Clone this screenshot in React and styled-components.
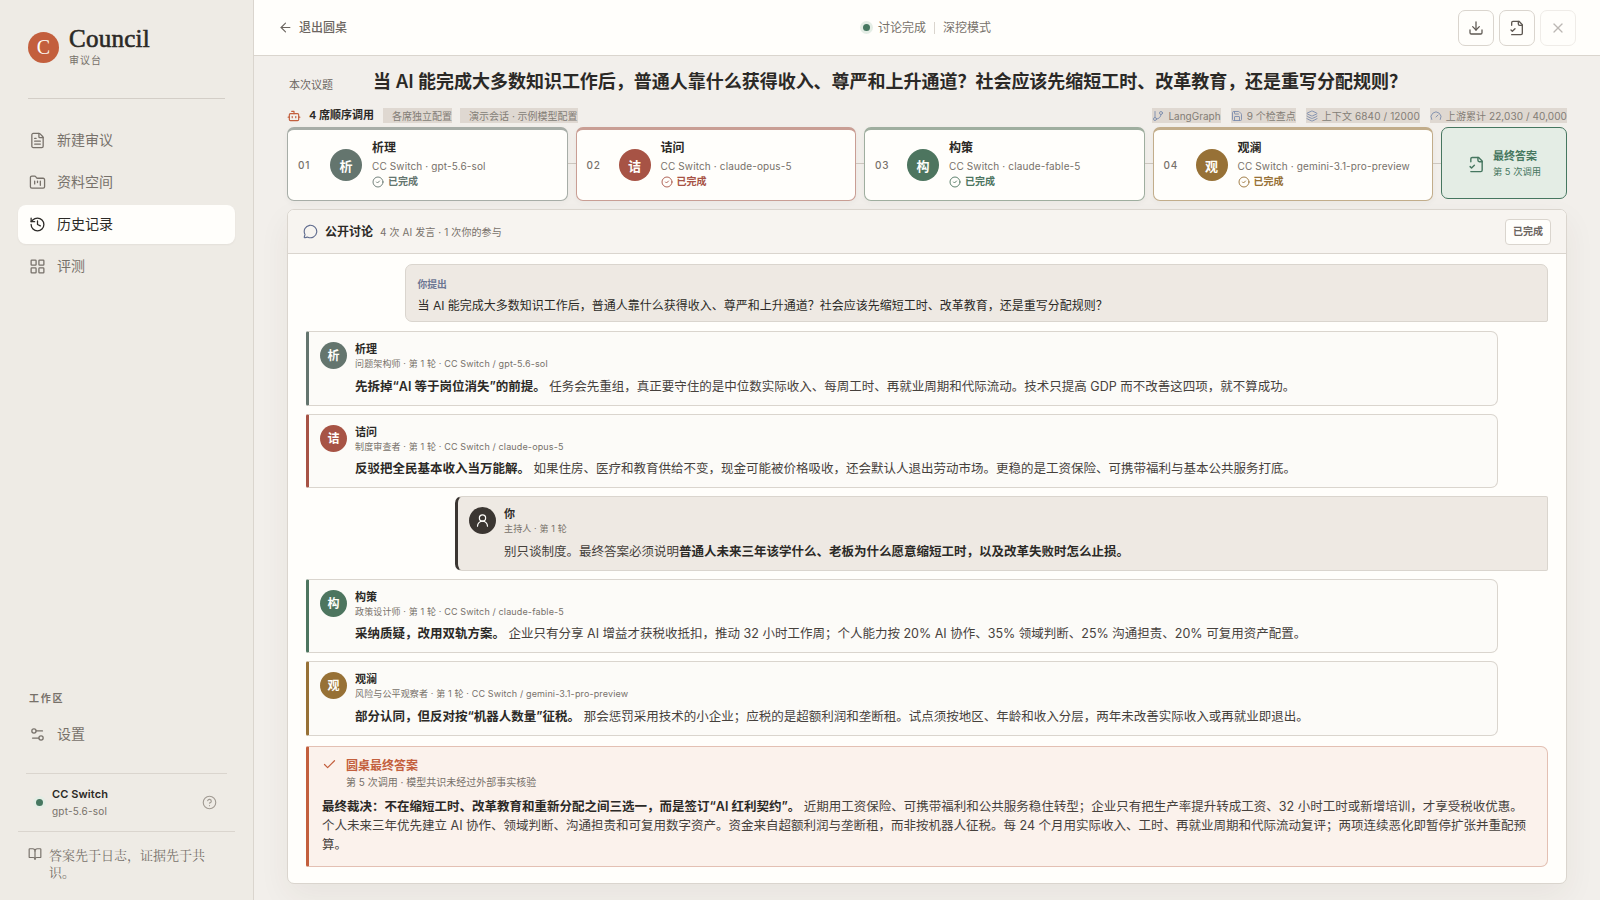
import React from 'react';
import styled, { createGlobalStyle } from 'styled-components';
import {
  ArrowLeft, BookOpen, Bot, Check, CircleCheck, CircleHelp, Download, FileText,
  FolderKanban, Gauge, GitBranch, History, Layers, LayoutGrid, MessageCircle,
  Save, Settings2, UserRound, X,
} from 'lucide-react';

const GlobalStyle = createGlobalStyle`
  * {
    box-sizing: border-box;
  }

  body {
    margin: 0;
    background: #f2efeb;
    color: #2b2926;
    font-family: Inter, "Noto Sans CJK SC", sans-serif;
    -webkit-font-smoothing: antialiased;
  }

  svg {
    display: block;
    flex: none;
  }
`;

const Shell = styled.div`
  display: grid;
  grid-template-columns: 254px 1fr;
  height: 900px;
  overflow: hidden;
`;

/* ---------- sidebar ---------- */

const Sidebar = styled.aside`
  display: flex;
  flex-direction: column;
  padding: 0 18px;
  background: #eeebe5;
  border-right: 1px solid #dad5ce;
`;

const Brand = styled.div`
  display: flex;
  align-items: center;
  gap: 10px;
  height: 99px;
  margin: 0 10px;
  padding-bottom: 4px;
  border-bottom: 1px solid #d3cec7;
`;

const BrandMark = styled.div`
  display: grid;
  place-items: center;
  width: 31px;
  height: 31px;
  border-radius: 50%;
  background: #c35f3d;
  color: #fffefb;
  font: 20px/1 "Liberation Serif", serif;
`;

const BrandName = styled.div`
  font: 25px/26px "Liberation Serif", serif;
  letter-spacing: 0.25px;
  -webkit-text-stroke: 0.6px #2b2926;
`;

const BrandSub = styled.div`
  margin-top: 1px;
  padding-bottom: 1px;
  font-size: 10px;
  line-height: 14px;
  letter-spacing: 1px;
  color: #77716a;
`;

const Nav = styled.nav`
  display: flex;
  flex-direction: column;
  gap: 3px;
  margin-top: 22px;
`;

const NavItem = styled.div`
  display: flex;
  align-items: center;
  gap: 11px;
  height: 39px;
  padding: 0 11px;
  border-radius: 8px;
  font-size: 14px;
  color: ${props => props.$active ? '#2b2926' : '#77716a'};
  background: ${props => props.$active ? '#fffefb' : 'transparent'};
  box-shadow: ${props => props.$active ? '0 1px 2px rgba(60, 50, 40, 0.06)' : 'none'};

  span {
    padding-bottom: 3px;
  }
`;

const NavLabel = styled.div`
  margin: auto 11px 9px;
  font-size: 10px;
  font-weight: 600;
  line-height: 16px;
  letter-spacing: 1.8px;
  color: #77716a;
`;

const Provider = styled.div`
  display: flex;
  align-items: center;
  height: 58px;
  margin: 19px 8px 0;
  padding: 0 10px;
  border-top: 1px solid #dad5ce;
`;

const Dot = styled.span`
  width: 7px;
  height: 7px;
  border-radius: 50%;
  background: #467760;
  box-shadow: 0 0 0 3px #e4ede5;
`;

const ProviderText = styled.div`
  flex: 1;
  margin-left: 9px;
  color: #77716a;
  font-size: 10px;
  line-height: 17px;
  letter-spacing: 0.2px;

  strong {
    display: block;
    font-size: 11px;
    font-weight: 600;
    letter-spacing: 0.1px;
    color: #2b2926;
  }
`;

const Motto = styled.div`
  display: flex;
  gap: 7px;
  height: 69px;
  padding: 15px 18px 0 10px;
  border-top: 1px solid #dad5ce;
  font: 13px/17px "Liberation Serif", "Noto Serif CJK SC", "Noto Sans CJK SC", serif;
  color: #77716a;
`;

/* ---------- top bar ---------- */

const Main = styled.main`
  display: flex;
  flex-direction: column;
  min-width: 0;
`;

const TopBar = styled.header`
  display: grid;
  grid-template-columns: 1fr auto 1fr;
  align-items: center;
  height: 56px;
  padding: 0 24px;
  background: #fffefb;
  border-bottom: 1px solid #dad5ce;
  font-size: 12px;
  color: #6b655f;
`;

const Back = styled.div`
  display: flex;
  align-items: center;
  gap: 6px;
  font-weight: 500;

  span {
    padding-bottom: 2px;
  }
`;

const Status = styled.div`
  display: flex;
  align-items: center;
  gap: 8px;
  color: #77716a;

  b {
    padding-bottom: 2px;
    font-weight: 400;
  }
`;

const StatusRule = styled.span`
  width: 1px;
  height: 12px;
  background: #dad5ce;
`;

const Actions = styled.div`
  display: flex;
  justify-content: flex-end;
  gap: 5px;
`;

const IconButton = styled.div`
  display: grid;
  place-items: center;
  width: 36px;
  height: 36px;
  border: 1px solid #dad5ce;
  border-radius: 7px;
  color: #5e5852;
  opacity: ${props => props.$disabled ? 0.42 : 1};
`;

/* ---------- topic and seats ---------- */

const Content = styled.div`
  display: flex;
  flex-direction: column;
  flex: 1;
  padding: 0 33px 16px;
`;

const Topic = styled.div`
  display: flex;
  align-items: center;
  height: 52px;
  padding-left: 2px;

  span {
    width: 84px;
    padding-top: 3px;
    font-size: 11px;
    color: #6b655f;
  }

  h1 {
    margin: 0;
    font-size: 18px;
    font-weight: 600;
    line-height: 26px;
    letter-spacing: -0.02px;
    white-space: nowrap;
  }
`;

const MetaRow = styled.div`
  display: flex;
  align-items: center;
  height: 15px;
  white-space: nowrap;
`;

const MetaTitle = styled.strong`
  margin: 0 9px 0 8px;
  font-size: 11px;
  font-weight: 600;
  line-height: 15px;
`;

const Tag = styled.span`
  display: flex;
  align-items: center;
  gap: ${props => props.$gap || 0}px;
  height: 15px;
  margin-right: 8px;
  padding-left: ${props => props.$indent || 0}px;
  background: #dfd8d1;
  font-size: 10px;
  line-height: 14px;
  letter-spacing: ${props => props.$spacing || 0}px;
  color: #837d76;

  svg {
    color: #7c8cae;
  }

  b {
    font-weight: 400;
  }
`;

const MetaRight = styled.div`
  display: flex;
  gap: 10px;
  margin-left: auto;

  ${Tag} {
    margin: 0;
  }
`;

const Seats = styled.div`
  display: grid;
  grid-template-columns: repeat(4, 1fr) 126px;
  align-items: start;
  gap: 8px;
  margin-top: 4px;
`;

const Seat = styled.div`
  position: relative;
  display: flex;
  align-items: center;
  height: 74px;
  padding: 0 10px;
  background: #fffefb;
  border: 1px solid ${props => props.$line};
  border-top-width: 3px;
  border-radius: 7px;
  box-shadow: 0 2px 6px rgba(60, 50, 40, 0.04);

  &::after {
    content: '';
    position: absolute;
    top: 33px;
    right: -9px;
    width: 8px;
    height: 1px;
    background: #cdc7bf;
  }
`;

const SeatNo = styled.span`
  width: 32px;
  font-size: 10px;
  font-weight: 500;
  letter-spacing: 0.9px;
  color: #77716a;
`;

const Avatar = styled.div`
  display: grid;
  place-items: center;
  flex: none;
  width: ${props => props.$size}px;
  height: ${props => props.$size}px;
  padding-bottom: ${props => props.$lift || 0}px;
  border-radius: 50%;
  background: ${props => props.$color};
  color: #fffefb;
  font-size: ${props => props.$size > 30 ? 13 : 12}px;
  font-weight: 600;
`;

const SeatText = styled.div`
  margin-left: 10px;
  padding-bottom: 2px;
  white-space: nowrap;
`;

const SeatName = styled.div`
  font-size: 12px;
  font-weight: 600;
  line-height: 18px;
`;

const SeatModel = styled.div`
  margin-top: 1px;
  font-size: 10px;
  line-height: 16px;
  letter-spacing: 0.13px;
  color: #77716a;
`;

const SeatState = styled.div`
  display: flex;
  align-items: center;
  gap: 4px;
  font-size: 10px;
  font-weight: 600;
  line-height: 14px;
  color: ${props => props.$color};

  span {
    padding-bottom: 1px;
  }
`;

const FinalSeat = styled.div`
  display: flex;
  align-items: center;
  justify-content: center;
  gap: 8px;
  height: 72px;
  padding: 2px 0 0 1px;
  background: #e4ede5;
  border: 1px solid #467760;
  border-radius: 7px;
  color: #467760;
  font-size: 9.3px;
  line-height: 16.5px;

  strong {
    display: block;
    font-size: 11px;
    font-weight: 600;
  }
`;

/* ---------- discussion ---------- */

const Panel = styled.section`
  flex: 1;
  margin-top: 8px;
  background: #fffefb;
  border: 1px solid #dad5ce;
  border-radius: 7px;
  box-shadow: 0 12px 32px rgba(60, 50, 40, 0.06);
`;

const PanelHead = styled.div`
  display: flex;
  align-items: center;
  height: 44px;
  padding: 0 15px;
  background: #f7f4f0;
  border-bottom: 1px solid #dad5ce;
  border-radius: 6px 6px 0 0;

  svg {
    color: #5f6b8e;
  }

  h2 {
    margin: 0 7px 0 7px;
    padding-bottom: 2px;
    font-size: 12px;
    font-weight: 600;
  }

  span {
    padding-bottom: 1px;
    font-size: 10px;
    letter-spacing: 0.1px;
    color: #77716a;
  }
`;

const DoneBadge = styled.div`
  margin-left: auto;
  padding: 0 7px 1px;
  background: #fffefb;
  border: 1px solid #dad5ce;
  border-radius: 4px;
  font-size: 10px;
  font-weight: 600;
  line-height: 23px;
  color: #6b655f;
`;

const Thread = styled.div`
  display: flex;
  flex-direction: column;
  gap: 8px;
  padding: 10px 18px 0;
`;

const Question = styled.div`
  height: 58px;
  margin: 0 0 1px 99px;
  padding: 11px 11.5px 0;
  background: #eee9e3;
  border: 1px solid #dad5ce;
  border-radius: 7px 7px 2px 7px;
  font-size: 12px;
  line-height: 22px;

  small {
    display: block;
    margin-bottom: 1px;
    font-size: 9.8px;
    font-weight: 600;
    line-height: 18px;
    color: #6c7693;
  }
`;

const Message = styled.article`
  display: flex;
  gap: 8px;
  height: 74.6px;
  margin-left: ${props => props.$own ? 149 : 0}px;
  margin-right: ${props => props.$own ? 0 : 50}px;
  padding: 10px 11px 0;
  background: ${props => props.$own ? '#eee9e3' : '#fcfbf8'};
  border: 1px solid #dad5ce;
  border-left: 3px solid ${props => props.$color};
  border-radius: ${props => props.$own ? '7px 2px 2px 7px' : '2px 7px 7px 2px'};
`;

const Author = styled.div`
  font-size: 11px;
  font-weight: 600;
  line-height: 15px;
`;

const Role = styled.div`
  font-size: 9px;
  line-height: 14px;
  letter-spacing: 0.14px;
  color: #77716a;
`;

const Body = styled.p`
  margin: ${props => props.$top}px 0 0;
  font-size: 12.5px;
  line-height: 18.75px;
  color: #46413c;

  strong {
    font-weight: 600;
    color: #2b2926;
  }
`;

const Verdict = styled.article`
  height: 121px;
  margin-top: 2px;
  padding: 10px 13px 0;
  background: #fbf2ec;
  border: 1px solid #e3c0b3;
  border-left: 3px solid #c35f3d;
  border-radius: 2px 7px 7px 2px;
`;

const VerdictHead = styled.div`
  display: flex;
  gap: 9px;
  font-size: 10px;
  line-height: 15px;
  color: #77716a;

  svg {
    color: #c35f3d;
  }

  strong {
    display: block;
    font-size: 12px;
    font-weight: 600;
    line-height: 18px;
    color: #c35f3d;
  }
`;

// file outline with the check mark in its lower left corner
const FileCheckIcon = ({ size }) => (
  <svg width={size} height={size} viewBox="0 0 24 24" fill="none" stroke="currentColor"
    strokeWidth="2" strokeLinecap="round" strokeLinejoin="round">
    <path d="M4 22h14a2 2 0 0 0 2-2V7l-5-5H6a2 2 0 0 0-2 2v4" />
    <path d="M14 2v4a2 2 0 0 0 2 2h4" />
    <path d="m3 15 2 2 4-4" />
  </svg>
);

const navItems = [
  { label: '新建审议', Icon: FileText },
  { label: '资料空间', Icon: FolderKanban },
  { label: '历史记录', Icon: History, active: true },
  { label: '评测', Icon: LayoutGrid },
];

const seats = [
  { no: '01', mark: '析', name: '析理', model: 'gpt-5.6-sol', color: '#64756e', line: '#a7ada7' },
  { no: '02', mark: '诘', name: '诘问', model: 'claude-opus-5', color: '#a75345', line: '#c99e94' },
  { no: '03', mark: '构', name: '构策', model: 'claude-fable-5', color: '#4d755f', line: '#9fae9f' },
  { no: '04', mark: '观', name: '观澜', model: 'gemini-3.1-pro-preview', color: '#977136', line: '#c2ad8b' },
];

const messages = [
  {
    mark: '析', name: '析理', color: '#64756e',
    role: '问题架构师 · 第 1 轮 · CC Switch / gpt-5.6-sol',
    body: <><strong>先拆掉“AI 等于岗位消失”的前提。</strong> 任务会先重组，真正要守住的是中位数实际收入、每周工时、再就业周期和代际流动。技术只提高 GDP 而不改善这四项，就不算成功。</>,
  },
  {
    mark: '诘', name: '诘问', color: '#a75345',
    role: '制度审查者 · 第 1 轮 · CC Switch / claude-opus-5',
    body: <><strong>反驳把全民基本收入当万能解。</strong> 如果住房、医疗和教育供给不变，现金可能被价格吸收，还会默认人退出劳动市场。更稳的是工资保险、可携带福利与基本公共服务打底。</>,
  },
  {
    own: true, name: '你', color: '#3b3632',
    role: '主持人 · 第 1 轮',
    body: <>别只谈制度。最终答案必须说明<strong>普通人未来三年该学什么、老板为什么愿意缩短工时，以及改革失败时怎么止损。</strong></>,
  },
  {
    mark: '构', name: '构策', color: '#4d755f',
    role: '政策设计师 · 第 1 轮 · CC Switch / claude-fable-5',
    body: <><strong>采纳质疑，改用双轨方案。</strong> 企业只有分享 AI 增益才获税收抵扣，推动 32 小时工作周；个人能力按 20% AI 协作、35% 领域判断、25% 沟通担责、20% 可复用资产配置。</>,
  },
  {
    mark: '观', name: '观澜', color: '#977136',
    role: '风险与公平观察者 · 第 1 轮 · CC Switch / gemini-3.1-pro-preview',
    body: <><strong>部分认同，但反对按“机器人数量”征税。</strong> 那会惩罚采用技术的小企业；应税的是超额利润和垄断租。试点须按地区、年龄和收入分层，两年未改善实际收入或再就业即退出。</>,
  },
];

const question = '当 AI 能完成大多数知识工作后，普通人靠什么获得收入、尊严和上升通道？社会应该先缩短工时、改革教育，还是重写分配规则？';

const App = () => {
  return (
    <Shell>
      <GlobalStyle />
      <Sidebar>
        <Brand>
          <BrandMark>C</BrandMark>
          <div>
            <BrandName>Council</BrandName>
            <BrandSub>审议台</BrandSub>
          </div>
        </Brand>
        <Nav>
          {navItems.map(({ label, Icon, active }) => (
            <NavItem key={label} $active={active}>
              <Icon size={17} strokeWidth={1.8} />
              <span>{label}</span>
            </NavItem>
          ))}
        </Nav>
        <NavLabel>工作区</NavLabel>
        <NavItem>
          <Settings2 size={17} strokeWidth={1.8} />
          <span>设置</span>
        </NavItem>
        <Provider>
          <Dot />
          <ProviderText>
            <strong>CC Switch</strong>
            gpt-5.6-sol
          </ProviderText>
          <CircleHelp size={15} strokeWidth={1.8} color="#a09a92" />
        </Provider>
        <Motto>
          <BookOpen size={14} strokeWidth={2} />
          答案先于日志，证据先于共识。
        </Motto>
      </Sidebar>

      <Main>
        <TopBar>
          <Back>
            <ArrowLeft size={15} strokeWidth={1.8} />
            <span>退出圆桌</span>
          </Back>
          <Status>
            <Dot />
            <b>讨论完成</b>
            <StatusRule />
            <b>深挖模式</b>
          </Status>
          <Actions>
            <IconButton><Download size={16} strokeWidth={1.9} /></IconButton>
            <IconButton><FileCheckIcon size={16} /></IconButton>
            <IconButton $disabled><X size={16} strokeWidth={1.9} /></IconButton>
          </Actions>
        </TopBar>

        <Content>
          <Topic>
            <span>本次议题</span>
            <h1>{question}</h1>
          </Topic>
          <MetaRow>
            <Bot size={14} strokeWidth={2} color="#c35f3d" />
            <MetaTitle>4 席顺序调用</MetaTitle>
            <Tag $indent={9}><b>各席独立配置</b></Tag>
            <Tag $indent={9}><b>演示会话 · 示例模型配置</b></Tag>
            <MetaRight>
              <Tag $gap={4}><GitBranch size={12} strokeWidth={1.8} /><b>LangGraph</b></Tag>
              <Tag $gap={4}><Save size={12} strokeWidth={1.8} /><b>9 个检查点</b></Tag>
              <Tag $gap={4} $spacing={0.12}><Layers size={12} strokeWidth={1.8} /><b>上下文 6840 / 12000</b></Tag>
              <Tag $gap={4} $spacing={0.07}><Gauge size={12} strokeWidth={1.8} /><b>上游累计 22,030 / 40,000</b></Tag>
            </MetaRight>
          </MetaRow>

          <Seats>
            {seats.map(seat => (
              <Seat key={seat.no} $line={seat.line}>
                <SeatNo>{seat.no}</SeatNo>
                <Avatar $size={32} $color={seat.color}>{seat.mark}</Avatar>
                <SeatText>
                  <SeatName>{seat.name}</SeatName>
                  <SeatModel>CC Switch · {seat.model}</SeatModel>
                  <SeatState $color={seat.color}>
                    <CircleCheck size={12} strokeWidth={1.8} />
                    <span>已完成</span>
                  </SeatState>
                </SeatText>
              </Seat>
            ))}
            <FinalSeat>
              <FileCheckIcon size={17} />
              <div>
                <strong>最终答案</strong>
                第 5 次调用
              </div>
            </FinalSeat>
          </Seats>

          <Panel>
            <PanelHead>
              <MessageCircle size={15} strokeWidth={1.8} />
              <h2>公开讨论</h2>
              <span>4 次 AI 发言 · 1 次你的参与</span>
              <DoneBadge>已完成</DoneBadge>
            </PanelHead>
            <Thread>
              <Question>
                <small>你提出</small>
                {question}
              </Question>
              {messages.map(msg => (
                <Message key={msg.name} $color={msg.color} $own={msg.own}>
                  <Avatar $size={27} $lift={msg.own ? 0 : 2} $color={msg.color}>
                    {msg.own ? <UserRound size={15} strokeWidth={1.9} /> : msg.mark}
                  </Avatar>
                  <div>
                    <Author>{msg.name}</Author>
                    <Role>{msg.role}</Role>
                    <Body $top={6.5}>{msg.body}</Body>
                  </div>
                </Message>
              ))}
              <Verdict>
                <VerdictHead>
                  <Check size={15} strokeWidth={1.9} />
                  <div>
                    <strong>圆桌最终答案</strong>
                    第 5 次调用 · 模型共识未经过外部事实核验
                  </div>
                </VerdictHead>
                <Body $top={8.5}>
                  <strong>最终裁决：不在缩短工时、改革教育和重新分配之间三选一，而是签订“AI 红利契约”。</strong> 近期用工资保险、可携带福利和公共服务稳住转型；企业只有把生产率提升转成工资、32 小时工时或新增培训，才享受税收优惠。个人未来三年优先建立 AI 协作、领域判断、沟通担责和可复用数字资产。资金来自超额利润与垄断租，而非按机器人征税。每 24 个月用实际收入、工时、再就业周期和代际流动复评；两项连续恶化即暂停扩张并重配预算。
                </Body>
              </Verdict>
            </Thread>
          </Panel>
        </Content>
      </Main>
    </Shell>
  );
};

export default App;
